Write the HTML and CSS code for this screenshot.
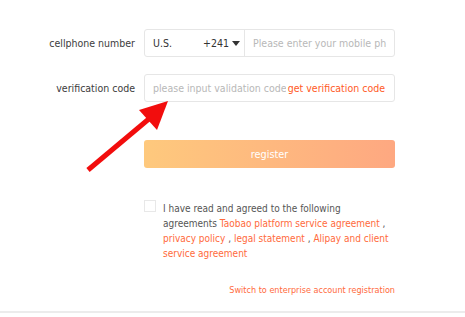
FILE: index.html
```html
<!DOCTYPE html>
<html>
<head>
<meta charset="utf-8">
<link rel="stylesheet" href="styles.css">
</head>
<body>
<div class="page">
  <form class="form">
    <div class="row row-phone">
      <label class="label">cellphone number</label>
      <div class="field">
        <div class="country">
          <span class="country-name">U.S.</span>
          <span class="country-code">+241<span class="caret"></span></span>
        </div>
        <input class="input" type="text" placeholder="Please enter your mobile phone number">
      </div>
    </div>
    <div class="row row-code">
      <label class="label">verification code</label>
      <div class="field">
        <input class="input input-code" type="text" placeholder="please input validation code">
        <a class="get-code">get verification code</a>
      </div>
    </div>
    <div class="row row-btn">
      <div class="spacer"></div>
      <button type="button" class="btn">register</button>
    </div>
    <div class="row row-agree">
      <div class="spacer"></div>
      <div class="agree">
        <span class="checkbox"></span>
        <p class="agree-text">I have read and agreed to the following agreements <a>Taobao platform service agreement</a> , <a>privacy policy</a> , <a>legal statement</a> , <a>Alipay and client service agreement</a></p>
      </div>
    </div>
    <div class="row row-switch">
      <div class="spacer"></div>
      <a class="switch">Switch to enterprise account registration</a>
    </div>
  </form>
  <svg class="arrow" width="465" height="317" viewBox="0 0 465 317">
    <line x1="88" y1="170" x2="150" y2="118" stroke="#f20d0d" stroke-width="5"/>
    <polygon points="168,101 139,110 157,130" fill="#f20d0d"/>
  </svg>
</div>
</body>
</html>
```
FILE: styles.css
```css
* { box-sizing: border-box; }
html, body { margin: 0; padding: 0; background: #fff; }
body {
  font-family: "DejaVu Sans Condensed", "DejaVu Sans", sans-serif;
  font-size: 10.5px;
  color: #3c3c3c;
}
.page {
  position: relative;
  width: 465px;
  height: 317px;
  overflow: hidden;
}
.form {
  display: flex;
  flex-direction: column;
  padding-top: 29px;
  height: 313px;
  border-bottom: 2px solid #ececec;
}
.row { display: flex; align-items: center; }
.label, .spacer {
  width: 144px;
  flex: none;
  padding-right: 9px;
  text-align: right;
  color: #3c3c3c;
}
.field {
  display: flex;
  width: 251px;
  height: 28px;
  border: 1px solid #e6e6e6;
  border-radius: 3px;
}
.row-code { margin-top: 17px; }
.country {
  width: 100px;
  flex: none;
  display: flex;
  align-items: center;
  justify-content: space-between;
  padding: 0 4px 0 8px;
  border-right: 1px solid #e6e6e6;
  color: #333;
}
.caret {
  display: inline-block;
  margin-left: 3px;
  vertical-align: 1px;
  border-left: 4px solid transparent;
  border-right: 4px solid transparent;
  border-top: 5px solid #333;
}
.input {
  flex: 1;
  min-width: 0;
  border: 0;
  outline: 0;
  padding: 0 8px;
  font: inherit;
  background: transparent;
}
.input::placeholder { color: #b8b8b8; }
.input-code { padding-right: 2px; }
.get-code {
  flex: none;
  align-self: center;
  padding-right: 9px;
  color: #ff5a1f;
}
.row-btn { margin-top: 38px; }
.btn {
  width: 251px;
  height: 28px;
  border: 0;
  border-radius: 3px;
  background: linear-gradient(90deg, #fec97d, #fea881);
  color: #fff;
  font: inherit;
  font-size: 10.8px;
}
.row-agree { margin-top: 32px; align-items: flex-start; }
.agree { display: flex; width: 251px; }
.checkbox {
  flex: none;
  width: 12px;
  height: 12px;
  margin: 0 7px 0 0;
  border: 1px solid #e8e8e8;
}
.agree-text {
  margin: 0;
  margin-top: 1px;
  font-size: 10px;
  line-height: 15px;
  color: #555;
  width: 230px;
}
.agree-text a, .switch { color: #ff6a3c; }
.row-switch { justify-content: flex-end; margin-top: 24px; }
.row-switch .spacer { flex: 1; }
.switch { margin-right: 70px; font-size: 9px; }
.arrow {
  position: absolute;
  left: 0;
  top: 0;
  pointer-events: none;
}
```
